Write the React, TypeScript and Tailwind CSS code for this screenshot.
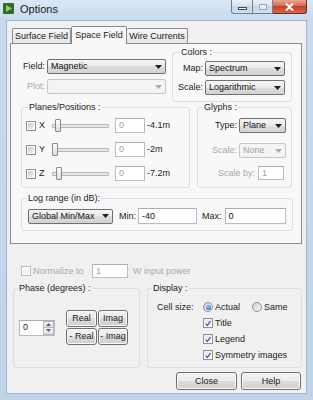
import React from "react";

const BTN =
  "border border-[#707070] rounded-[3px] bg-[linear-gradient(to_bottom,#f2f2f2_0%,#ebebeb_50%,#dddddd_50%,#cfcfcf_100%)] shadow-[inset_0_0_0_1px_#fbfbfb] flex items-center justify-center";

function Arrow({ disabled }: { disabled?: boolean }) {
  return (
    <svg width="7" height="4" viewBox="0 0 7 4">
      <path d="M0 0H7L3.5 4Z" fill={disabled ? "#a8a8a8" : "#1e1e1e"} />
    </svg>
  );
}

function Combo({ className, text, disabled }: { className: string; text: string; disabled?: boolean }) {
  return (
    <div
      className={`${className} h-[15px] flex items-center rounded-[2px] border ${
        disabled
          ? "border-[#c3c6ca] bg-[#f4f4f4] text-[#a0a0a0]"
          : "border-[#707070] bg-[linear-gradient(to_bottom,#f5f5f5_0%,#ebebeb_50%,#dddddd_50%,#d3d3d3_100%)] text-[#111]"
      }`}
    >
      <span className="flex-1 pl-[3px] whitespace-nowrap overflow-hidden">{text}</span>
      <span className="w-[13px] flex justify-center">
        <Arrow disabled={disabled} />
      </span>
    </div>
  );
}

function Input({ className, value, disabled }: { className: string; value: string; disabled?: boolean }) {
  return (
    <div
      className={`${className} bg-white border border-[#b8bcc2] border-t-[#abadb3] flex items-center pl-[3px] ${
        disabled ? "text-[#a0a0a0]" : "text-[#111]"
      }`}
    >
      {value}
    </div>
  );
}

function Check({ checked, disabled }: { checked?: boolean; disabled?: boolean }) {
  return (
    <div
      className={`w-[10px] h-[10px] shrink-0 border bg-white p-px ${
        disabled ? "border-[#bcbcbc]" : "border-[#8e8f8f]"
      }`}
    >
      <div
        className={`w-full h-full flex items-center justify-center ${
          disabled
            ? "bg-[#f2f2f2]"
            : checked
            ? "bg-[linear-gradient(135deg,#dfe3e8,#fbfbfb)]"
            : "bg-[linear-gradient(135deg,#c6cbd1,#f4f4f4)]"
        }`}
      >
        {checked && (
          <svg width="7" height="7" viewBox="0 0 7 7">
            <path d="M0.8 3.6L2.8 5.8L6.4 0.6" stroke="#3b5ca6" strokeWidth="1.5" fill="none" />
          </svg>
        )}
      </div>
    </div>
  );
}

function Radio({ checked }: { checked?: boolean }) {
  return (
    <div className="w-[10px] h-[10px] shrink-0 rounded-full border border-[#8e8f8f] bg-[linear-gradient(135deg,#cdd1d6,#f8f8f8)] flex items-center justify-center">
      {checked && (
        <div className="w-[5px] h-[5px] rounded-full bg-[radial-gradient(circle_at_40%_35%,#9cc3f0,#1f4f9e)]" />
      )}
    </div>
  );
}

function Slider({ thumb }: { thumb: string }) {
  return (
    <div className="relative w-[57px] h-[15px] flex items-center">
      <div className="w-full h-[4px] border border-[#b3b6ba] bg-[#e6e8ea] rounded-[1px]" />
      <div
        className={`absolute top-px ${thumb} w-[6px] h-[13px] border border-[#8b8b8b] rounded-[1px] bg-[linear-gradient(to_bottom,#fbfbfb,#dcdcdc)]`}
      />
    </div>
  );
}

function Legend({ children, className }: { children: React.ReactNode; className: string }) {
  return <legend className={`${className} px-[1px] leading-[11px] text-[#1b1b1b]`}>{children}</legend>;
}

const FS = "border border-[#d5dfe5] rounded-[3px] m-0 p-0 min-w-0";

function PlaneRow({ label, thumb, value }: { label: string; thumb: string; value: string }) {
  return (
    <div className="flex items-center h-[15px] pl-[4px]">
      <Check />
      <span className="ml-[3px] w-[13px]">{label}</span>
      <Slider thumb={thumb} />
      <Input className="ml-[6px] w-[30px] h-[15px]" value="0" disabled />
      <span className="ml-[2px]">{value}</span>
    </div>
  );
}

export default function App() {
  return (
    <div className="w-[313px] h-[400px] overflow-hidden flex flex-col bg-[linear-gradient(to_bottom,#dbe7f5_0px,#c8daee_20px,#bfd3e9_100%)] font-['Liberation_Sans',Arial,sans-serif] text-[9px] leading-[11px] text-[#1b1b1b]">
      {/* Title bar */}
      <div className="h-[20px] flex items-start shrink-0">
        <svg className="ml-[3px] mt-[3px]" width="11" height="11" viewBox="0 0 11 11">
          <rect x="0" y="0" width="11" height="11" rx="1" fill="#2f6b2a" />
          <path d="M3 2L9 5.5L3 9Z" fill="#8fd45f" />
        </svg>
        <span className="ml-[6px] mt-[3px] text-[11px] leading-[13px] text-[#1a1a1a]">Options</span>
        <div className="ml-auto mr-[6px] flex h-[14px]">
          <div className="w-[22px] h-[14px] border border-[#6d7f98] border-t-0 rounded-bl-[3px] bg-[linear-gradient(to_bottom,#e9f0f8,#d6e2ef_50%,#c5d5e7_50%,#d3e1f0)] flex items-end justify-center pb-[3px]">
            <div className="w-[9px] h-[3px] bg-white border border-[#3c4a5e]" />
          </div>
          <div className="w-[20px] h-[14px] border border-[#6d7f98] border-t-0 border-l-0 bg-[linear-gradient(to_bottom,#e9f0f8,#d6e2ef_50%,#c5d5e7_50%,#d3e1f0)] flex items-center justify-center">
            <div className="w-[8px] h-[6px] border border-[#9aa7b8] bg-[#e8eef6]" />
          </div>
          <div className="w-[34px] h-[14px] border border-[#7a2a1c] border-t-0 border-l-0 rounded-br-[3px] bg-[linear-gradient(to_bottom,#eaa594,#d4634b_50%,#c2412a_50%,#d36a50)] flex items-center justify-center">
            <svg width="9" height="8" viewBox="0 0 9 8">
              <path d="M1 0.5L8 7.5M8 0.5L1 7.5" stroke="#ffffff" strokeWidth="2" />
            </svg>
          </div>
        </div>
      </div>

      {/* Client */}
      <div className="mx-[6px] h-[374px] shrink-0 border border-[#a3b5ca] bg-[#f0f0f0] flex flex-col">
        {/* Tabs */}
        <div className="ml-[5px] mt-[5px] h-[17px] flex items-end">
          <div className="w-[59px] h-[15px] border border-[#898c95] border-b-0 rounded-t-[2px] bg-[linear-gradient(to_bottom,#f6f6f6,#e6e6e6)] flex items-center justify-center">
            Surface Field
          </div>
          <div className="relative z-10 w-[56px] h-[18px] -mb-px border border-[#898c95] border-b-0 rounded-t-[2px] bg-[#f8f8f8] flex items-start pt-[3px] justify-center">
            Space Field
          </div>
          <div className="w-[61px] h-[15px] border border-[#898c95] border-b-0 border-l-0 rounded-t-[2px] bg-[linear-gradient(to_bottom,#f6f6f6,#e6e6e6)] flex items-center justify-center">
            Wire Currents
          </div>
        </div>

        {/* Panel */}
        <div className="ml-[3px] w-[292px] h-[201px] border border-[#898c95] bg-[#f8f8f8] pt-[3px] pl-[10px] flex flex-col">
          {/* Row 1 */}
          <div className="flex">
            <div className="w-[145px] flex flex-col">
              <div className="mt-[12px] flex items-center">
                <span className="w-[24px] text-right">Field:</span>
                <Combo className="ml-[2px] w-[119px]" text="Magnetic" />
              </div>
              <div className="mt-[5px] flex items-center">
                <span className="w-[24px] text-right text-[#a8a8a8]">Plot:</span>
                <Combo className="ml-[2px] w-[119px]" text="" disabled />
              </div>
            </div>
            <fieldset className={`${FS} ml-[6px] w-[120px] h-[55px]`}>
              <Legend className="ml-[7px]">Colors :</Legend>
              <div className="mt-[3px] flex items-center">
                <span className="w-[30px] text-right">Map:</span>
                <Combo className="ml-[2px] w-[80px]" text="Spectrum" />
              </div>
              <div className="mt-[4px] flex items-center">
                <span className="w-[30px] text-right">Scale:</span>
                <Combo className="ml-[2px] w-[80px]" text="Logarithmic" />
              </div>
            </fieldset>
          </div>

          {/* Row 2 */}
          <div className="flex gap-[7px]">
            <fieldset className={`${FS} w-[169px] h-[86px]`}>
              <Legend className="ml-[6px]">Planes/Positions :</Legend>
              <div className="mt-[5px] flex flex-col gap-[9px]">
                <PlaneRow label="X" thumb="left-[3px]" value="-4.1m" />
                <PlaneRow label="Y" thumb="left-[0px]" value="-2m" />
                <PlaneRow label="Z" thumb="left-[4px]" value="-7.2m" />
              </div>
            </fieldset>
            <fieldset className={`${FS} w-[95px] h-[86px]`}>
              <Legend className="ml-[5px]">Glyphs :</Legend>
              <div className="mt-[5px] flex items-center">
                <span className="w-[39px] text-right">Type:</span>
                <Combo className="ml-[2px] w-[47px]" text="Plane" />
              </div>
              <div className="mt-[10px] flex items-center">
                <span className="w-[39px] text-right text-[#a8a8a8]">Scale:</span>
                <Combo className="ml-[2px] w-[47px]" text="None" disabled />
              </div>
              <div className="mt-[8px] flex items-center justify-end pr-[7px]">
                <span className="text-[#a8a8a8]">Scale by:</span>
                <Input className="ml-[3px] w-[26px] h-[14px]" value="1" disabled />
              </div>
            </fieldset>
          </div>

          {/* Row 3 */}
          <fieldset className={`${FS} mt-[5px] w-[272px] h-[38px]`}>
            <Legend className="ml-[5px]">Log range (in dB):</Legend>
            <div className="mt-[4px] pl-[6px] flex items-center">
              <Combo className="w-[85px]" text="Global Min/Max" />
              <span className="ml-[6px]">Min:</span>
              <Input className="ml-[2px] w-[59px] h-[16px]" value="-40" />
              <span className="ml-[5px]">Max:</span>
              <Input className="ml-[3px] w-[61px] h-[16px]" value="0" />
            </div>
          </fieldset>
        </div>

        {/* Normalize */}
        <div className="mt-[20px] ml-[14px] h-[14px] flex items-center text-[#a8a8a8]">
          <Check disabled />
          <span className="ml-[2px] w-[59px]">Normalize to</span>
          <Input className="w-[36px] h-[14px] bg-[#f7f7f7]" value="1" disabled />
          <span className="ml-[5px]">W input power</span>
        </div>

        {/* Phase & Display */}
        <div className="mt-[5px] flex">
          <fieldset className={`${FS} ml-[6px] w-[127px] h-[85px]`}>
            <Legend className="ml-[4px]">Phase (degrees) :</Legend>
            <div className="mt-[16px] flex items-center">
              <div className="ml-[5px] w-[36px] h-[16px] bg-white border border-[#b8bcc2] border-t-[#abadb3] flex">
                <div className="flex-1 pl-[3px] flex items-center">0</div>
                <div className="w-[11px] flex flex-col">
                  <div className="flex-1 border border-[#b7b9bc] bg-[linear-gradient(to_bottom,#f4f4f4,#e0e0e0)] flex items-center justify-center">
                    <svg width="5" height="3" viewBox="0 0 5 3">
                      <path d="M0 3H5L2.5 0Z" fill="#4d6185" />
                    </svg>
                  </div>
                  <div className="flex-1 border border-t-0 border-[#b7b9bc] bg-[linear-gradient(to_bottom,#f4f4f4,#e0e0e0)] flex items-center justify-center">
                    <svg width="5" height="3" viewBox="0 0 5 3">
                      <path d="M0 0H5L2.5 3Z" fill="#4d6185" />
                    </svg>
                  </div>
                </div>
              </div>
              <div className="ml-[11px] grid grid-cols-[31px_30px] auto-rows-[17px] gap-px">
                <div className={BTN}>Real</div>
                <div className={BTN}>Imag</div>
                <div className={BTN}>- Real</div>
                <div className={BTN}>- Imag</div>
              </div>
            </div>
          </fieldset>
          <fieldset className={`${FS} ml-[7px] w-[155px] h-[85px]`}>
            <Legend className="ml-[4px]">Display :</Legend>
            <div className="mt-[5px] flex flex-col">
              <div className="h-[16px] flex items-center pl-[9px]">
                <span className="w-[46px]">Cell size:</span>
                <div className="w-[49px] flex items-center">
                  <Radio checked />
                  <span className="ml-[2px]">Actual</span>
                </div>
                <Radio />
                <span className="ml-[2px]">Same</span>
              </div>
              <div className="h-[16px] flex items-center pl-[55px]">
                <Check checked />
                <span className="ml-[2px]">Title</span>
              </div>
              <div className="h-[16px] flex items-center pl-[55px]">
                <Check checked />
                <span className="ml-[2px]">Legend</span>
              </div>
              <div className="h-[16px] flex items-center pl-[55px]">
                <Check checked />
                <span className="ml-[2px]">Symmetry images</span>
              </div>
            </div>
          </fieldset>
        </div>

        {/* Buttons */}
        <div className="mt-[4px] pr-[5px] flex justify-end gap-[4px]">
          <div className={`${BTN} w-[61px] h-[18px]`}>Close</div>
          <div className={`${BTN} w-[60px] h-[18px]`}>Help</div>
        </div>
      </div>
    </div>
  );
}
